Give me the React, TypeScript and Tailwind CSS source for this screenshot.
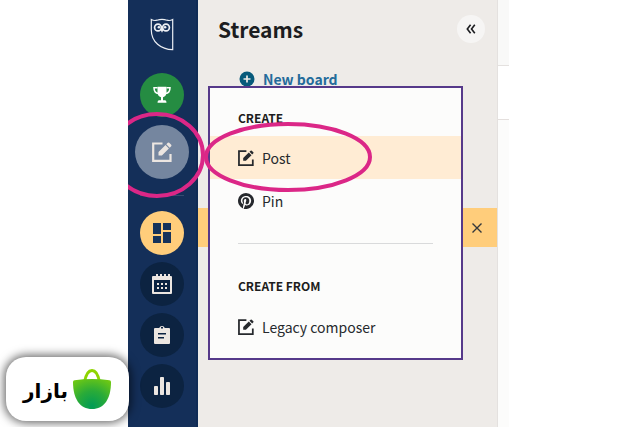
import { clsx } from "clsx";
import type { ReactNode } from "react";

const FONT = "font-['Noto_Sans_CJK_SC','Open_Sans',sans-serif]";

function ComposeIcon({ className }: { className?: string }) {
    return (
        <svg viewBox="0 0 20 20" className={className} fill="none" aria-hidden="true">
            <path d="M10.500 1.500H1.200v17.300h17.300V12" stroke="currentColor" strokeWidth="2.200" />
            <path
                d="M6.500 13.500v-3.400l7-7 3.400 3.400-7 7ZM14.300 2.300l1.500-1.500q.7-.6 1.400 0l2 2q.6.700 0 1.400l-1.500 1.500Z"
                fill="currentColor"
            />
        </svg>
    );
}

function OwlLogo() {
    return (
        <svg viewBox="0 0 24 33" className="h-[33px] w-6" fill="none" stroke="#eceff4" aria-hidden="true">
            <path d="M1.300 1.500Q4 3 7 2.200Q12 .7 17 2.200Q20 3 22.700 1.500V31.700C11 31.400 1.300 24 1.300 12Z" strokeWidth="1.200" />
            <circle cx="8" cy="9.500" r="3.400" strokeWidth="1.700" />
            <circle cx="16" cy="9.500" r="3.400" strokeWidth="1.700" />
            <circle cx="8.900" cy="9.300" r="1.300" fill="#eceff4" stroke="none" />
            <circle cx="15.100" cy="9.300" r="1.300" fill="#eceff4" stroke="none" />
            <path d="M10 10.800h4L12 14.800Z" fill="#eceff4" stroke="none" />
        </svg>
    );
}

function TrophyIcon() {
    return (
        <svg viewBox="0 0 18 18" className="size-[18px]" aria-hidden="true">
            <path d="M4.500.8h9V6q0 4.500-3.500 5.200v3h2.200q1.300.2 1.300 2.600h-9q0-2.400 1.300-2.600H8v-3Q4.500 10.500 4.500 6Z" fill="#fff" />
            <path d="M4.500 1.800H1q0 5.400 4.500 5.700M13.500 1.800H17q0 5.400-4.500 5.700" fill="none" stroke="#fff" strokeWidth="1.500" />
        </svg>
    );
}

function BoardsIcon() {
    return (
        <svg viewBox="0 0 18 20" className="h-5 w-[18px]" fill="#15325b" aria-hidden="true">
            <path d="M0 0h8v11H0zM10 0h8v7h-8zM0 13h8v7H0zM10 9h8v11h-8z" />
        </svg>
    );
}

function CalendarIcon() {
    return (
        <svg viewBox="0 0 20 20" className="size-5" fill="#ece6e1" aria-hidden="true">
            <path
                fillRule="evenodd"
                d="M0 3q0-1 1-1h3V0h2v2h2V0h2v2h2V0h2v2h2V0h2v2h1q1 0 1 1v16q0 1-1 1H1q-1 0-1-1ZM2 6v12h16V6Z"
            />
            <path d="M5 9h2v2H5zM9 9h2v2H9zM13 9h2v2h-2zM5 13h2v2H5zM9 13h2v2H9zM13 13h2v2h-2z" />
        </svg>
    );
}

function ClipboardIcon() {
    return (
        <svg viewBox="0 0 16 20" className="h-5 w-4" fill="#ece6e1" aria-hidden="true">
            <path
                fillRule="evenodd"
                d="M1 3h4.200a3 3 0 0 1 5.600 0H15q1 0 1 1v14q0 1-1 1H1q-1 0-1-1V4q0-1 1-1ZM7 3.500h2v-1.500H7ZM4 8v1.500h8V8ZM4 12v1.500h6V12Z"
            />
        </svg>
    );
}

function ChartIcon() {
    return (
        <svg viewBox="0 0 16 18" className="h-[18px] w-4" fill="#ece6e1" aria-hidden="true">
            <rect x="0" y="9" width="4" height="9" rx="0.8" />
            <rect x="6" y="0" width="4" height="18" rx="0.8" />
            <rect x="12" y="5" width="4" height="13" rx="0.8" />
        </svg>
    );
}

function PinterestIcon() {
    return (
        <svg viewBox="0 0 24 24" className="size-4" fill="currentColor" aria-hidden="true">
            <path d="M12 0a12 12 0 0 0-4.370 23.170c-.1-.95-.2-2.400.04-3.440l1.410-5.960s-.36-.72-.36-1.780c0-1.670.97-2.910 2.170-2.910 1.020 0 1.520.77 1.520 1.690 0 1.030-.66 2.570-1 3.990-.28 1.200.6 2.170 1.780 2.170 2.130 0 3.770-2.250 3.770-5.490 0-2.870-2.060-4.880-5.010-4.880-3.410 0-5.410 2.560-5.410 5.200 0 1.030.4 2.140.89 2.740.1.120.11.220.08.340l-.33 1.360c-.05.220-.17.270-.4.160-1.500-.7-2.440-2.890-2.440-4.650 0-3.780 2.750-7.260 7.930-7.260 4.160 0 7.400 2.970 7.400 6.930 0 4.140-2.610 7.460-6.230 7.460-1.210 0-2.360-.63-2.750-1.380l-.75 2.850c-.27 1.040-1 2.350-1.490 3.150A12 12 0 1 0 12 0Z" />
        </svg>
    );
}

function NavButton({ label, className, children }: { label: string; className?: string; children: ReactNode }) {
    return (
        <button
            type="button"
            aria-label={label}
            className={clsx("flex shrink-0 items-center justify-center rounded-full", className)}
        >
            {children}
        </button>
    );
}

function Sidebar() {
    return (
        <nav className="relative flex w-[70px] shrink-0 flex-col items-center border-r-2 border-[#0f2b55] bg-[#142f59] pt-[18px]">
            <a href="#home" aria-label="Home">
                <OwlLogo />
            </a>
            <NavButton label="Achievements" className="mt-[22px] size-11 bg-[#258c42]">
                <TrophyIcon />
            </NavButton>
            <NavButton label="Create" className="mt-2 size-[54px] bg-[#75869f] text-[#ece6e1]">
                <ComposeIcon className="size-5" />
            </NavButton>
            <hr className="mt-4 w-11 border-[#344c70]" />
            <NavButton label="Streams" className="mt-[15px] size-11 bg-[#ffcd7b]">
                <BoardsIcon />
            </NavButton>
            <div className="mt-[7px] flex flex-col gap-[7px]">
                <NavButton label="Planner" className="size-11 bg-[#0c2341]">
                    <CalendarIcon />
                </NavButton>
                <NavButton label="Assignments" className="size-11 bg-[#0c2341]">
                    <ClipboardIcon />
                </NavButton>
                <NavButton label="Analytics" className="size-11 bg-[#0c2341]">
                    <ChartIcon />
                </NavButton>
            </div>
            <svg viewBox="0 0 80 90" className="pointer-events-none absolute top-[110px] left-0 z-20 h-[90px] w-20" aria-hidden="true">
                <ellipse cx="29" cy="45" rx="46" ry="41" fill="none" stroke="#db2787" strokeWidth="4" />
            </svg>
        </nav>
    );
}

function MenuItem({ label, icon, active }: { label: string; icon: ReactNode; active?: boolean }) {
    return (
        <button
            type="button"
            className={clsx(
                "flex h-[43px] w-full items-center gap-2 pl-7 text-left text-sm text-[#26292d]",
                active && "bg-[#ffecd4]"
            )}
        >
            {icon}
            {label}
        </button>
    );
}

function CreateMenu() {
    return (
        <div className="absolute top-[86px] right-[34px] left-[10px] z-10 border-2 border-[#56398a] bg-[#fcfcfb] pb-[10px]">
            <h2 className="pt-[18px] pl-7 text-xs leading-6 font-bold text-[#1c1d20]">CREATE</h2>
            <div className="pt-[6px]">
                <MenuItem label="Post" active icon={<ComposeIcon className="size-4" />} />
                <MenuItem label="Pin" icon={<PinterestIcon />} />
            </div>
            <hr className="mx-7 mt-[21px] border-[#d9dadb]" />
            <h2 className="pt-[30px] pl-7 text-xs leading-6 font-bold text-[#1c1d20]">CREATE FROM</h2>
            <div className="pt-[7px]">
                <MenuItem label="Legacy composer" icon={<ComposeIcon className="size-4" />} />
            </div>
        </div>
    );
}

function StreamsPanel() {
    return (
        <main className="relative min-w-0 flex-1 bg-[#eeebe8]">
            <header className="flex h-[58px] items-center justify-between pr-3 pl-5">
                <h1 className="text-[21px] leading-8 font-bold text-[#1c1d20]">Streams</h1>
                <button
                    type="button"
                    aria-label="Collapse"
                    className="flex size-7 items-center justify-center rounded-full bg-[#f6f5f4] text-[#1c1d20]"
                >
                    <svg viewBox="0 0 10 10" className="size-[10px]" fill="none" stroke="currentColor" strokeWidth="1.600" aria-hidden="true">
                        <path d="M4.600.7 1.300 5l3.300 4.300M8.800.7 5.500 5l3.300 4.300" />
                    </svg>
                </button>
            </header>
            <button type="button" className="mt-[9px] ml-[41px] flex h-6 items-center gap-2 text-sm font-bold text-[#246b9b]">
                <svg viewBox="0 0 16 16" className="size-4" aria-hidden="true">
                    <circle cx="8" cy="8" r="7.500" fill="#075a7b" />
                    <path d="M8 4.500v7M4.500 8h7" stroke="#eeebe8" strokeWidth="1.700" />
                </svg>
                New board
            </button>
            <div className="mt-[117px] flex h-[39px] items-center justify-end bg-[#ffcd7b] pr-[15px]">
                <button type="button" aria-label="Dismiss" className="text-[#34383c]">
                    <svg viewBox="0 0 10 10" className="size-[10px]" fill="none" stroke="currentColor" strokeWidth="1.400" aria-hidden="true">
                        <path d="m.5.500 9 9M9.500.500l-9 9" />
                    </svg>
                </button>
            </div>
            <CreateMenu />
            <svg viewBox="0 0 170 74" className="pointer-events-none absolute top-[120px] left-[5px] z-20 h-[74px] w-[170px]" aria-hidden="true">
                <ellipse cx="85" cy="37" rx="82" ry="33" fill="none" stroke="#db2787" strokeWidth="4" />
            </svg>
        </main>
    );
}

function BazaarBadge() {
    return (
        <a
            href="#bazaar"
            className="absolute bottom-[6px] left-[6px] z-30 flex h-16 w-[123px] items-center justify-end gap-1 rounded-[20px] bg-white pr-[17px] shadow-[0_0_10px_2px_rgba(0,0,0,0.6)]"
        >
            <span dir="rtl" lang="fa" className="pt-1 font-['DejaVu_Sans',sans-serif] text-xl leading-8 font-bold text-black">
                بازار
            </span>
            <svg viewBox="0 0 40 42" className="h-[42px] w-10" aria-hidden="true">
                <defs>
                    <radialGradient id="bag" gradientUnits="userSpaceOnUse" cx="20" cy="38" r="38">
                        <stop offset="0" stopColor="#009b55" />
                        <stop offset="0.4" stopColor="#2aab38" />
                        <stop offset="1" stopColor="#92d800" />
                    </radialGradient>
                </defs>
                <path d="M12.500 14C14 6 16 2.500 20 2.500S26 6 27.500 14" fill="none" stroke="#8ed400" strokeWidth="3" />
                <path d="M1 14Q1 12.500 2.500 12.200Q20 9.800 37.500 12.200Q39 12.500 39 14C39 31 32 41 20 41S1 31 1 14Z" fill="url(#bag)" />
            </svg>
        </a>
    );
}

export default function App() {
    return (
        <div className={clsx("relative flex min-h-screen overflow-hidden bg-white pr-[121px] pl-32", FONT)}>
            <Sidebar />
            <StreamsPanel />
            <aside className="flex w-3 shrink-0 flex-col border-l border-[#e4e1df]">
                <div className="h-[66px] border-b border-[#e4e1df] bg-[#f9f9f8]" />
                <div className="h-[54px] border-b border-[#e4dfdd]" />
                <div className="flex-1 bg-[#fcfcfb]" />
            </aside>
            <BazaarBadge />
        </div>
    );
}
